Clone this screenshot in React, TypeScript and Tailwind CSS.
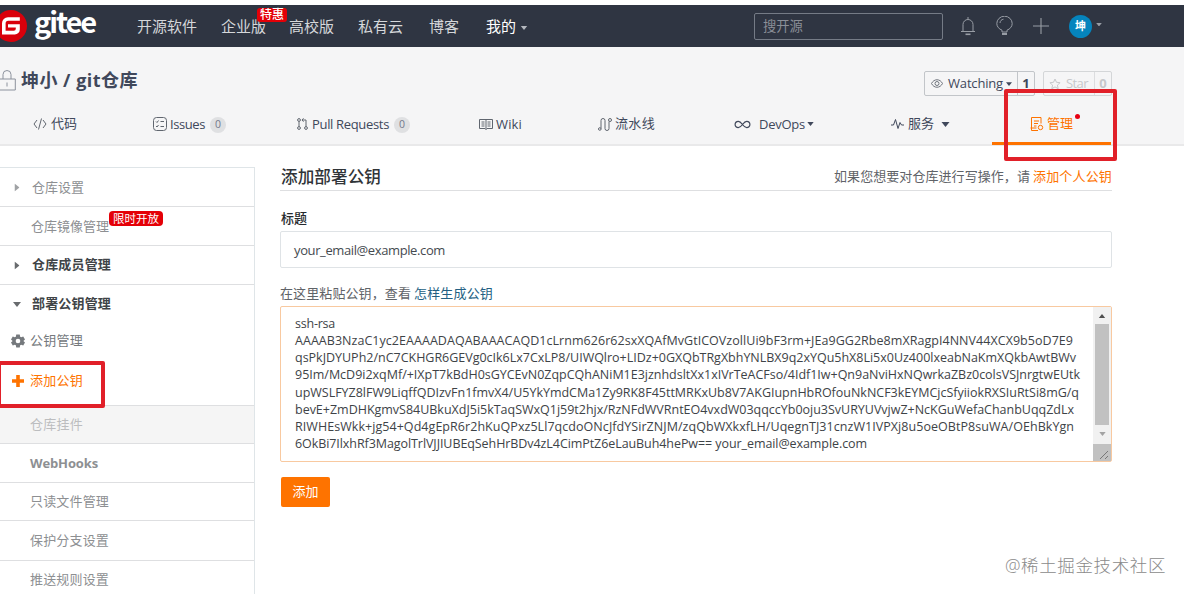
import React, { useLayoutEffect, useRef, useState } from "react";

/** Single-line label whose tracking is adjusted so that it fills its own width. */
function Fit({ children, className = "" }: { children: string; className?: string }) {
  const outer = useRef<HTMLSpanElement>(null);
  const inner = useRef<HTMLSpanElement>(null);
  const [spacing, setSpacing] = useState(0);
  useLayoutEffect(() => {
    if (!outer.current || !inner.current) return;
    const gap = outer.current.clientWidth - inner.current.getBoundingClientRect().width;
    setSpacing(gap / children.length);
  }, [children]);
  return (
    <span ref={outer} className={`block shrink-0 whitespace-nowrap ${className}`}>
      <span ref={inner} style={{ letterSpacing: `${spacing}px` }}>
        {children}
      </span>
    </span>
  );
}

function Caret({ className = "" }: { className?: string }) {
  return (
    <svg className={`shrink-0 ${className}`} viewBox="0 0 8 5" fill="currentColor">
      <path d="M0 0h8L4 5z" />
    </svg>
  );
}

function Stroke({ className = "", box = "0 0 16 16", children }: { className?: string; box?: string; children: React.ReactNode }) {
  return (
    <svg className={`shrink-0 ${className}`} viewBox={box} fill="none" stroke="currentColor" strokeWidth="1">
      {children}
    </svg>
  );
}

function Header() {
  return (
    <header className="mt-[5px] flex h-[42px] items-center bg-[#2f3542] text-[15px] text-[#d5d7da]">
      <svg className="h-8 w-[27px] shrink-0" viewBox="5 0 27 32">
        <circle cx="16" cy="16" r="16" fill="#d9000b" />
        <path d="M24.800 7.200H13a6 6 0 0 0-6 6v11.300h12.800a5 5 0 0 0 5-5V14.300H13v3.200h7.800v1.300a2 2 0 0 1-2 2h-8.200v-7.400a2.600 2.600 0 0 1 2.600-2.600h11.600z" fill="#fff" />
      </svg>
      <Fit className="-mt-[12px] ml-[7px] w-[61px] font-['Noto_Sans_CJK_SC',sans-serif] text-[29px] leading-8 font-bold text-white">gitee</Fit>
      <nav className="ml-[42px] flex items-center pt-px">
        <Fit className="w-[60px]">开源软件</Fit>
        <div className="relative ml-6">
          <Fit className="w-[45px]">企业版</Fit>
          <span className="absolute -top-[7px] left-[36px] flex h-[14px] w-[30px] items-center justify-center rounded-[3px] bg-[#e40007] text-[12px] leading-none font-medium text-white">
            特惠
          </span>
        </div>
        <Fit className="ml-[23px] w-[45px]">高校版</Fit>
        <Fit className="ml-6 w-[45px]">私有云</Fit>
        <Fit className="ml-[26px] w-[30px]">博客</Fit>
        <Fit className="ml-[27px] w-[30px] text-white">我的</Fit>
        <Caret className="mt-[3px] ml-1 h-1 w-[8px] text-[#b3b7bd]" />
      </nav>
      <div className="ml-[226px] flex h-[27px] w-[189px] items-center rounded-[2px] border border-[#757b86] px-2 pt-[2px] text-[13.3px] text-[#8b8f97]">
        搜开源
      </div>
      <div className="ml-[17px] flex items-center text-[#989da5]">
        <Stroke className="h-[19px] w-4" box="0 0 16 19">
          <path d="M8 0v2M1 14.5h14M3 14V7.5a5 5 0 0 1 10 0V14" />
          <path d="M5.5 17.3h5" strokeWidth="1.6" />
        </Stroke>
        <Stroke className="ml-[20px] h-5 w-[17px]" box="0 0 17 20">
          <path d="M6 16v-1.8C3 13 .8 10.600.8 7.600a7.500 7.200 0 0 1 15.4 0c0 3-2.200 5.400-5.200 6.600V16zM4 7c0-2 1.500-3.500 3.500-3.800" />
          <path d="M6 18h5" strokeWidth="2" />
        </Stroke>
        <Stroke className="ml-[20px] h-4 w-4">
          <path d="M8 0v16M0 8h16" strokeWidth="1.1" />
        </Stroke>
        <span className="ml-[20px] flex size-[23px] items-center justify-center rounded-full bg-[#0584bd] text-[11px] font-bold text-white">坤</span>
        <Caret className="-mt-[3px] ml-1 h-[3.500px] w-[6px]" />
      </div>
    </header>
  );
}

function RepoTitle() {
  return (
    <div className="flex h-[57px] items-center pt-[9px] text-[#40485b]">
      <Stroke className="h-[21px] w-4 text-[#8c929d]" box="0 0 16 21">
        <path d="M-2 9H15.300V20H-2M3 9V4.500a4 4 0 0 1 8 0V9M7 12.500v4" />
      </Stroke>
      <Fit className="ml-[5px] w-[117px] text-[18px] font-bold">坤小 / git仓库</Fit>
      <div className="mt-[7px] ml-[786px] flex h-[25px] w-[111px] items-center rounded-[2px] border border-[#c2c5c9] text-[13px]">
        <Stroke className="ml-[6px] h-[9px] w-3 text-[#70757e]" box="0 0 12 9">
          <path d="M.5 4.500C3-.5 9-.5 11.500 4.500 9 9.500 3 9.500.5 4.500z" />
          <circle cx="6" cy="4.500" r="2" />
        </Stroke>
        <Fit className="ml-[5px] w-[55px]">Watching</Fit>
        <Caret className="ml-[3px] h-1 w-[6px]" />
        <span className="ml-[5px] flex h-full flex-1 items-center justify-center border-l border-[#c2c5c9] font-bold">1</span>
      </div>
      <div className="mt-[7px] ml-[8px] flex h-[25px] w-[69px] items-center rounded-[2px] border border-[#d4d6d8] text-[13px] text-[#c6c8cb]">
        <Stroke className="ml-[5px] size-3" box="0 0 12 12">
          <path d="M6 1l1.500 3.300 3.600.4-2.700 2.400.8 3.600L6 8.900l-3.200 1.800.8-3.600L.9 4.700l3.600-.4z" />
        </Stroke>
        <Fit className="ml-[5px] w-[22px]">Star</Fit>
        <span className="ml-[6px] flex h-full flex-1 items-center justify-center border-l border-[#dcdddf] font-bold">0</span>
      </div>
    </div>
  );
}

function Count() {
  return <span className="mt-[2px] flex size-4 items-center justify-center rounded-full bg-[#dfe0e2] text-[10.500px] text-[#75798c]">0</span>;
}

function RepoTabs() {
  return (
    <nav className="flex h-[42px] border-b-2 border-[#e9e9ea] pl-[33px] text-[13px] text-[#40485b]">
      <div className="flex w-[120px] items-center">
        <Stroke className="h-3 w-[14px] text-[#60666f]" box="0 0 14 12">
          <path d="M4 2L1 6l3 4M10 2l3 4-3 4M8.500.5l-3 11" />
        </Stroke>
        <Fit className="ml-1 w-[26px]">代码</Fit>
      </div>
      <div className="flex w-[144px] items-center">
        <Stroke className="size-[14px] text-[#60666f]" box="0 0 14 14">
          <rect x=".5" y=".5" width="13" height="13" rx="3" />
          <path d="M3 4.500l1 1 1.500-2M3 9l1 1 1.500-2M7.500 4.500h3.500M7.500 9.500h3.500" />
        </Stroke>
        <Fit className="ml-[3px] w-[35px] pt-px">Issues</Fit>
        <span className="ml-[5px]"><Count /></span>
      </div>
      <div className="flex w-[182px] items-center">
        <Stroke className="h-3 w-[11px] text-[#60666f]" box="0 0 11 12">
          <circle cx="2" cy="2" r="1.400" /><circle cx="2" cy="10" r="1.400" /><circle cx="9" cy="10" r="1.400" />
          <path d="M2 3.400v5.200M9 8.600V2H5M6.500.3L5 2l1.500 1.700" />
        </Stroke>
        <Fit className="ml-1 w-[77px] pt-px">Pull Requests</Fit>
        <span className="ml-[5px]"><Count /></span>
      </div>
      <div className="flex w-[119px] items-center">
        <Stroke className="h-[11px] w-[14px] text-[#60666f]" box="0 0 14 11">
          <path d="M.5.5h13v9h-5.500l-1 1-1-1H.5zM7 .5v10M2.500 3h3M2.500 5h3M2.500 7h3M8.500 3h3M8.500 5h3M8.500 7h3" />
        </Stroke>
        <Fit className="ml-[3px] w-[26px] pt-px">Wiki</Fit>
      </div>
      <div className="flex w-[136px] items-center">
        <Stroke className="h-[13px] w-[14px] text-[#60666f]" box="0 0 14 13">
          <circle cx="1.800" cy="11" r="1.300" /><circle cx="12" cy="2" r="1.500" />
          <path d="M3 10.500V2.500a2 2 0 0 1 4 0v8a2 2 0 0 0 4 0V3.500" />
        </Stroke>
        <Fit className="ml-[3px] w-[40px]">流水线</Fit>
      </div>
      <div className="flex w-[157px] items-center">
        <Stroke className="h-[9px] w-[17px]" box="0 0 17 9">
          <path d="M8.500 4.500C7 2.500 6 1.300 4.300 1.300a3.200 3.200 0 0 0 0 6.400c1.700 0 2.700-1.200 4.200-3.200s2.500-3.200 4.200-3.200a3.200 3.200 0 0 1 0 6.400c-1.700 0-2.700-1.200-4.200-3.200z" strokeWidth="1.200" />
        </Stroke>
        <Fit className="ml-[8px] w-[46px] pt-px">DevOps</Fit>
        <Caret className="ml-[2px] h-1 w-[7px]" />
      </div>
      <div className="flex w-[101px] items-center">
        <Stroke className="h-[10px] w-[13px]" box="0 0 13 10">
          <path d="M0 6h2.500L4.500.5l2.500 9 2-6L10.500 6H13" />
        </Stroke>
        <Fit className="ml-1 w-[26px]">服务</Fit>
        <Caret className="ml-[7px] h-[5px] w-[9px]" />
      </div>
      <div className="relative flex h-[41px] w-[119px] items-center border-b-[3px] border-[#fe7300] pl-[38px] text-[#fe7300]">
        <Stroke className="mt-[2px] size-[14px]" box="0 0 14 14">
          <path d="M11 6.500V.5H1.500v13H8M.5 11h6M4 4h5M4 6.500h4M4 9h2.500" />
          <circle cx="10.500" cy="10.500" r="2.200" />
        </Stroke>
        <Fit className="mt-[2px] ml-[3px] w-[26px]">管理</Fit>
        <span className="absolute top-[10px] left-[83px] size-[5px] rounded-full bg-[#e60012]" />
      </div>
    </nav>
  );
}

function Sidebar() {
  const row = "flex items-center border-b border-[#dedfe1]";
  return (
    <aside className="mt-[21px] h-[427px] w-[255px] shrink-0 border-t border-r border-[#dfe5e8] text-[13px] text-[#8d8f92]">
      <div className={`${row} h-[39px]`}>
        <Caret className="ml-[13px] h-[5px] w-[8px] -rotate-90 text-[#a0a2a5]" />
        <Fit className="ml-[11px] w-[52px] pt-px">仓库设置</Fit>
      </div>
      <div className={`${row} relative h-[39px] pl-[31px]`}>
        <Fit className="w-[78px] pt-px">仓库镜像管理</Fit>
        <span className="absolute top-[4px] left-[109px] flex h-[15px] w-[54px] items-center justify-center rounded-[4px] bg-[#e40007] text-[11.500px] text-white">
          限时开放
        </span>
      </div>
      <div className={`${row} h-[39px] font-bold text-[#404447]`}>
        <Caret className="ml-[13px] h-[5px] w-[8px] -rotate-90 text-[#686b6e]" />
        <Fit className="ml-[11px] w-[79px]">仓库成员管理</Fit>
      </div>
      <div className="h-[121px] border-b border-[#dedfe1]">
        <div className="flex h-[38px] items-center font-bold text-[#404447]">
          <Caret className="ml-[13px] h-[5px] w-[8px] text-[#686b6e]" />
          <Fit className="ml-[11px] w-[79px]">部署公钥管理</Fit>
        </div>
        <div className="flex h-[36px] items-center text-[#75797d]">
          <svg className="ml-[11px] size-[14px]" viewBox="0 0 24 24" fill="currentColor">
            <path fillRule="evenodd" d="M9 1h6l.7 3.700 1.800 1 3.500-1.300 3 5.200L21.200 12l2.800 2.400-3 5.200-3.500-1.300-1.800 1L15 23H9l-.7-3.700-1.800-1L3 19.600l-3-5.200L2.800 12 0 9.600l3-5.200 3.500 1.300 1.800-1zM12 8a4 4 0 1 0 0 8 4 4 0 0 0 0-8z" />
          </svg>
          <Fit className="ml-[5px] w-[53px]">公钥管理</Fit>
        </div>
        <div className="flex h-[43px] items-center text-[#fe7300]">
          <svg className="ml-3 size-3" viewBox="0 0 12 12" fill="currentColor">
            <path d="M4.200 0h3.600v4.200H12v3.600H7.800V12H4.200V7.800H0V4.200h4.200z" />
          </svg>
          <Fit className="ml-[6px] w-[53px]">添加公钥</Fit>
        </div>
      </div>
      <div className={`${row} h-[38px] bg-[#f5f5f5] pl-[30px] text-[#bcbdbf]`}><Fit className="w-[53px]">仓库挂件</Fit></div>
      <div className={`${row} h-[39px] pl-[30px] font-bold`}><Fit className="w-[68px] pt-[2px]">WebHooks</Fit></div>
      <div className={`${row} h-[38px] pl-[30px]`}><Fit className="w-[79px]">只读文件管理</Fit></div>
      <div className={`${row} h-[40px] pl-[30px]`}><Fit className="w-[79px] pt-px">保护分支设置</Fit></div>
      <div className="flex h-[37px] items-center pl-[30px]"><Fit className="w-[79px]">推送规则设置</Fit></div>
    </aside>
  );
}

function KeyField() {
  return (
    <div className="mt-[3px] flex h-[156px] w-[832px] rounded-[2px] border border-[#f8c9a0] text-[12.500px] leading-[17.250px] text-[#3e4347]">
      <div className="w-[812px] pt-[7.600px] pl-[14px]">
        <Fit className="w-[40px]">ssh-rsa</Fit>
        <Fit className="w-[778px]">AAAAB3NzaC1yc2EAAAADAQABAAACAQD1cLrnm626r62sxXQAfMvGtICOVzollUi9bF3rm+JEa9GG2Rbe8mXRagpI4NNV44XCX9b5oD7E9</Fit>
        <Fit className="w-[781px]">qsPkJDYUPh2/nC7CKHGR6GEVg0cIk6Lx7CxLP8/UIWQlro+LIDz+0GXQbTRgXbhYNLBX9q2xYQu5hX8Li5x0Uz400lxeabNaKmXQkbAwtBWv</Fit>
        <Fit className="w-[785px]">95Im/McD9i2xqMf/+IXpT7kBdH0sGYCEvN0ZqpCQhANiM1E3jznhdsltXx1xIVrTeACFso/4Idf1Iw+Qn9aNviHxNQwrkaZBz0colsVSJnrgtwEUtk</Fit>
        <Fit className="w-[784px]">upWSLFYZ8lFW9LiqffQDIzvFn1fmvX4/U5YkYmdCMa1Zy9RK8F45ttMRKxUb8V7AKGIupnHbROfouNkNCF3kEYMCjcSfyiiokRXSIuRtSi8mG/q</Fit>
        <Fit className="w-[779px]">bevE+ZmDHKgmvS84UBkuXdJ5i5kTaqSWxQ1j59t2hjx/RzNFdWVRntEO4vxdW03qqccYb0oju3SvURYUVvjwZ+NcKGuWefaChanbUqqZdLx</Fit>
        <Fit className="w-[779px]">RIWHEsWkk+jg54+Qd4gEpR6r2hKuQPxz5Ll7qcdoONcJfdYSirZNJM/zqQbWXkxfLH/UqegnTJ31cnzW1IVPXj8u5oeOBtP8suWA/OEhBkYgn</Fit>
        <Fit className="w-[572px]">6OkBi7IlxhRf3MagolTrlVJJIUBEqSehHrBDv4zL4CimPtZ6eLauBuh4hePw== your_email@example.com</Fit>
      </div>
      <div className="flex w-[18px] flex-col items-center bg-[#f1f1f1]">
        <Caret className="mt-[7px] h-1 w-[8px] rotate-180 text-[#505050]" />
        <div className="mt-[6px] h-[101px] w-[14px] bg-[#c1c1c1]" />
        <Caret className="mt-[7px] h-1 w-[7px] text-[#a3a3a3]" />
        <div className="mt-auto h-[17px] w-full bg-[#c1c1c1]">
          <Stroke className="h-[17px] w-[17px] text-[#777]" box="0 0 17 17">
            <path d="M7 15l8-8M12 15l3-3" />
          </Stroke>
        </div>
      </div>
    </div>
  );
}

function DeployKeyForm() {
  return (
    <main className="ml-[25px] w-[832px] pt-[16px] text-[13px] text-[#40485b]">
      <div className="flex h-[29px] items-center justify-between border-b border-[#dedfe1]">
        <Fit className="ml-px w-[100px] pt-[3px] text-[16.600px] font-medium text-[#303438]">添加部署公钥</Fit>
        <div className="flex pt-px">
          <Fit className="w-[196px] text-[#5f6368]">如果您想要对仓库进行写操作，请</Fit>
          <Fit className="ml-[3px] w-[79px] text-[#fe7300]">添加个人公钥</Fit>
        </div>
      </div>
      <Fit className="mt-[17px] ml-px w-[26px] leading-5 font-medium text-[#26292c]">标题</Fit>
      <div className="mt-[3px] flex h-[37px] items-center rounded-[2px] border border-[#dfe3e6] pl-[13px]">
        <Fit className="w-[151px] pt-[2px] text-[#454a50]">your_email@example.com</Fit>
      </div>
      <div className="mt-[15px] flex leading-5">
        <Fit className="w-[131px] text-[#5f6368]">在这里粘贴公钥，查看</Fit>
        <Fit className="ml-[3px] w-[79px] text-[#235f83]">怎样生成公钥</Fit>
      </div>
      <KeyField />
      <button className="mt-[15px] ml-px flex h-[30px] w-[49px] items-center justify-center rounded-[2px] bg-[#fe7300] text-white">添加</button>
    </main>
  );
}

export default function App() {
  return (
    <div className="relative h-[594px] w-[1184px] overflow-hidden bg-white font-['Open_Sans','Noto_Sans_CJK_SC',sans-serif]">
      <div className="flex flex-col">
        <Header />
        <section className="bg-[#f5f5f6]">
          <RepoTitle />
          <RepoTabs />
        </section>
        <div className="flex">
          <Sidebar />
          <DeployKeyForm />
        </div>
      </div>
      <div className="absolute top-[89px] left-[1004px] h-[72px] w-[113px] rounded-[2px] border-4 border-[#e12029]" />
      <div className="absolute top-[361px] -left-[3px] h-[47px] w-[108px] rounded-[2px] border-4 border-[#e12029]" />
      <div className="absolute top-[553px] left-[1005px]">
        <Fit className="w-[161px] text-[17.500px] leading-6 font-light text-[#8a8a8a]">@稀土掘金技术社区</Fit>
      </div>
    </div>
  );
}
